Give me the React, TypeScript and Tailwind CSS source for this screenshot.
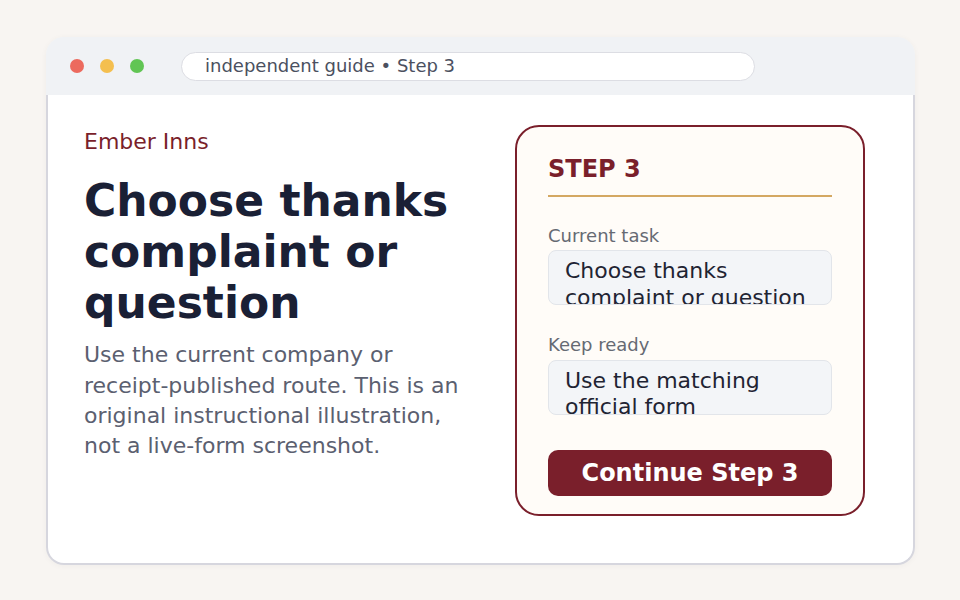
import React from "react";

const font = { fontFamily: '"DejaVu Sans", sans-serif' };

export default function App() {
  return (
    <div className="w-[960px] h-[600px] bg-[#f8f5f2] pt-[37px] pl-[46px]" style={font}>
      <div className="w-[869px] h-[528px] flex flex-col rounded-[18px] shadow-[0_1px_6px_rgba(0,0,0,0.04)]">
        <div className="h-[58px] shrink-0 bg-[#f0f2f5] rounded-t-[18px] flex items-center pl-[24px]">
          <div className="flex gap-[16px]">
            <span className="w-[14px] h-[14px] rounded-full bg-[#ec6a5e]" />
            <span className="w-[14px] h-[14px] rounded-full bg-[#f4bf4f]" />
            <span className="w-[14px] h-[14px] rounded-full bg-[#61c554]" />
          </div>
          <div className="ml-[37px] w-[574px] h-[29px] rounded-full bg-white border border-[#dcdde3] flex items-center pl-[23px] text-[18px] text-[#4b5060] leading-none">
            independent guide • Step 3
          </div>
        </div>
        <div className="flex-1 bg-white border-x-2 border-b-2 border-[#d6d6de] rounded-b-[18px] flex pt-[30px] pl-[36px] pr-[48px]">
          <div className="w-[390px] mt-[4px]">
            <div className="text-[22px] leading-[1.2] text-[#7a1f2b]">Ember Inns</div>
            <h1 className="mt-[21px] text-[44px] leading-[1.15] font-bold text-[#1a2035]">
              Choose thanks complaint or question
            </h1>
            <p className="mt-[12px] text-[22px] leading-[1.38] text-[#5b6070]">
              Use the current company or receipt-published route. This is an original instructional illustration, not a live-form screenshot.
            </p>
          </div>
          <div className="ml-auto w-[350px] h-[391px] border-2 border-[#7a1f2b] rounded-[24px] bg-[#fffcf8] px-[31px] pt-[28px]">
            <div className="text-[24px] leading-[1.2] font-bold text-[#7a1f2b]">STEP 3</div>
            <div className="mt-[11px] h-[2px] bg-[#d4a862]" />
            <div className="mt-[28px] text-[18px] leading-[1.2] text-[#666a73]">Current task</div>
            <div className="mt-[4px] h-[55px] overflow-hidden rounded-[8px] border border-[#e2e5ea] bg-[#f3f5f8] pl-[16px] pt-[7px] text-[22px] leading-[1.2] text-[#1f2433]">
              Choose thanks complaint or question
            </div>
            <div className="mt-[29px] text-[18px] leading-[1.2] text-[#666a73]">Keep ready</div>
            <div className="mt-[4px] h-[55px] overflow-hidden rounded-[8px] border border-[#e2e5ea] bg-[#f3f5f8] pl-[16px] pt-[7px] text-[22px] leading-[1.2] text-[#1f2433]">
              Use the matching official form
            </div>
            <div className="mt-[35px] h-[46px] rounded-[10px] bg-[#7a1f2b] flex items-center justify-center text-[24px] font-bold text-white">
              Continue Step 3
            </div>
          </div>
        </div>
      </div>
    </div>
  );
}
